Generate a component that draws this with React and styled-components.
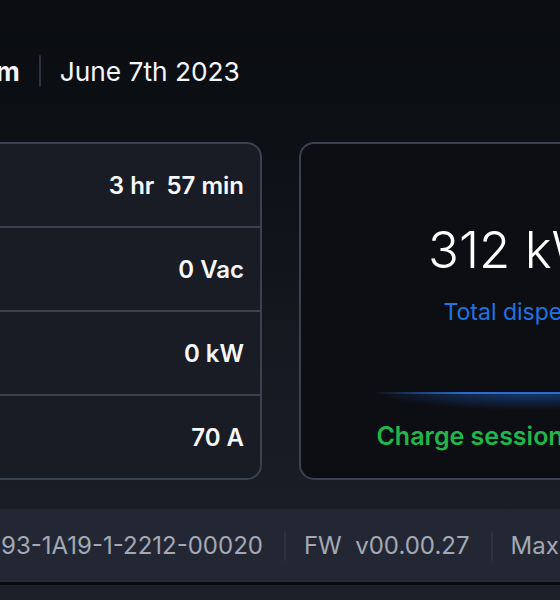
import React from "react";
import styled, { createGlobalStyle } from "styled-components";

const GlobalStyle = createGlobalStyle`
  html, body {
    margin: 0;
    padding: 0;
    height: 600px;
    overflow: hidden;
    background: #0b0d11;
  }
  body {
    font-family: Inter, "Noto Sans", "Liberation Sans", sans-serif;
    color: #f4f6fa;
  }
`;

const Screen = styled.div`
  width: 1040px;
  margin-left: -240px;
  min-height: 600px;
  display: flex;
  flex-direction: column;
  background: linear-gradient(180deg, #0a0c10 0%, #0d1015 25%, #151921 60%, #1c2029 100%);
`;

const Header = styled.header`
  height: 142px;
  display: flex;
  align-items: center;
  gap: 19px;
  padding-left: 142px;
  font-size: 26.3px;
`;

const Time = styled.span`
  font-weight: 700;
`;

const DateText = styled.span`
  font-weight: 400;
`;

const Divider = styled.span`
  width: 2px;
  height: ${(p) => p.$h || 32}px;
  background: #2c3340;
  border-radius: 1px;
`;

const BarDivider = styled(Divider)`
  margin-left: 3px;
`;

const Main = styled.main`
  display: grid;
  grid-template-columns: 461px 461px;
  gap: 37px;
  padding: 0 40px 0 41px;
  height: 338px;
`;

const StatsCard = styled.section`
  background: #191c25;
  border: 2px solid #3a4150;
  border-radius: 15px;
  display: flex;
  flex-direction: column;
  overflow: hidden;
`;

const StatRow = styled.div`
  flex: 1;
  display: flex;
  align-items: center;
  justify-content: space-between;
  padding: 0 16px 0 20px;
  border-bottom: 2px solid #3a4150;
  &:last-child {
    border-bottom: none;
  }
`;

const StatLabel = styled.span`
  font-size: 22px;
  color: #9aa1ad;
`;

const StatValue = styled.span`
  font-size: 24px;
  font-weight: 600;
  white-space: pre;
  color: #f7f8fb;
`;

const EnergyCard = styled.section`
  background: #0c0e13;
  border: 2px solid #3a4150;
  border-radius: 15px;
  display: flex;
  flex-direction: column;
  align-items: center;
  padding-top: 80px;
`;

const BigValue = styled.div`
  font-size: 51px;
  font-weight: 300;
  line-height: 1;
  color: #ffffff;
`;

const EnergyLabel = styled.div`
  margin-top: 26px;
  font-size: 23px;
  font-weight: 400;
  line-height: 1;
  color: #2273e0;
`;

const Glow = styled.div`
  margin-top: 68px;
  width: 310px;
  height: 18px;
  position: relative;
  background: radial-gradient(ellipse 50% 100% at 50% 0%, rgba(32, 96, 200, 0.55), rgba(32, 96, 200, 0) 100%);
  &::before {
    content: "";
    position: absolute;
    left: 0;
    right: 0;
    top: 0;
    height: 2px;
    background: linear-gradient(90deg, rgba(40, 110, 220, 0), #2a6cd0 30%, #2a6cd0 70%, rgba(40, 110, 220, 0));
  }
`;

const Status = styled.div`
  margin-top: 14px;
  font-size: 25px;
  font-weight: 600;
  line-height: 1;
  color: #21b54b;
`;

const InfoBar = styled.footer`
  margin-top: 29px;
  height: 73px;
  background: #232733;
  display: flex;
  align-items: center;
  gap: 18px;
  padding-left: 164px;
  font-size: 24px;
  color: #a3a9b4;
  white-space: pre;
`;

const Rule = styled.div`
  height: 3px;
  background: #07090d;
`;

const Bottom = styled.div`
  flex: 1;
  background: #1c2029;
`;

const stats = [
  { label: "Session time", value: "3 hr  57 min" },
  { label: "Voltage", value: "0 Vac" },
  { label: "Power", value: "0 kW" },
  { label: "Current", value: "70 A" },
];

export default function App() {
  return (
    <>
      <GlobalStyle />
      <Screen>
        <Header>
          <Time>10:42 am</Time>
          <Divider />
          <DateText>June 7th 2023</DateText>
        </Header>
        <Main>
          <StatsCard>
            {stats.map((s) => (
              <StatRow key={s.label}>
                <StatLabel>{s.label}</StatLabel>
                <StatValue>{s.value}</StatValue>
              </StatRow>
            ))}
          </StatsCard>
          <EnergyCard>
            <BigValue>312 kWh</BigValue>
            <EnergyLabel>Total dispensed</EnergyLabel>
            <Glow />
            <Status>Charge session complete</Status>
          </EnergyCard>
        </Main>
        <InfoBar>
          <span>SN  4593-1A19-1-2212-00020</span>
          <BarDivider $h={30} />
          <span>FW  v00.00.27</span>
          <BarDivider $h={30} />
          <span>Max  70 A</span>
        </InfoBar>
        <Rule />
        <Bottom />
      </Screen>
    </>
  );
}
